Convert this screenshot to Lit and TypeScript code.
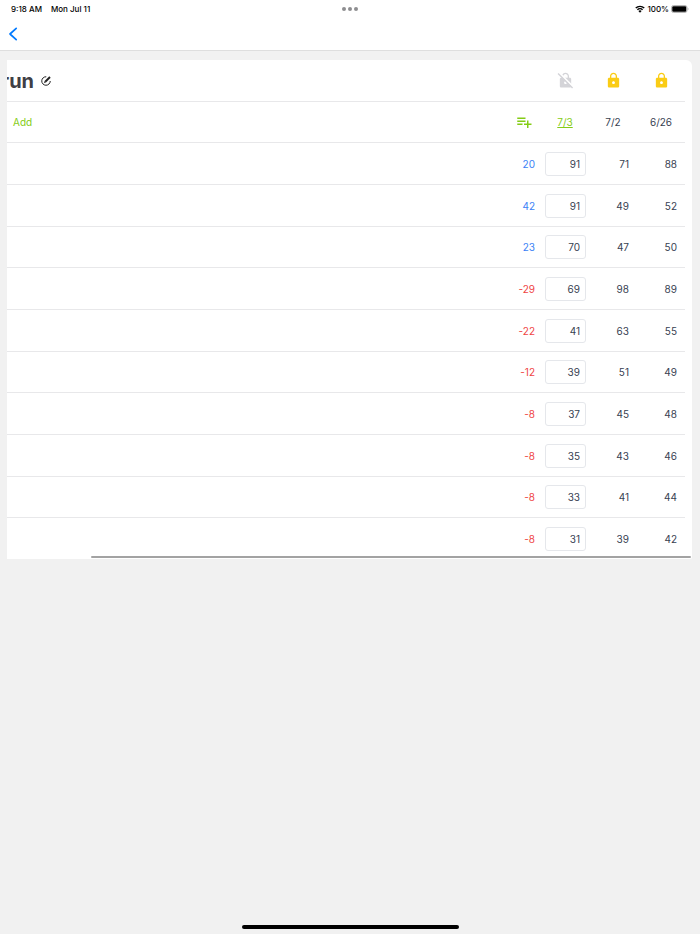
import { LitElement, html, css, svg, nothing } from "lit";
import { customElement, property, state } from "lit/decorators.js";
import { classMap } from "lit/directives/class-map.js";

const LOCK =
  "M18 8h-1V6c0-2.76-2.24-5-5-5S7 3.24 7 6v2H6c-1.1 0-2 .9-2 2v10c0 1.1.9 2 2 2h12c1.1 0 2-.9 2-2V10c0-1.1-.9-2-2-2zm-6 9c-1.1 0-2-.9-2-2s.9-2 2-2 2 .9 2 2-.9 2-2 2zm3.1-9H8.9V6c0-1.71 1.39-3.1 3.1-3.1 1.71 0 3.1 1.39 3.1 3.1v2z";

const ROWS: [number, number, number, number][] = [
  [20, 91, 71, 88],
  [42, 91, 49, 52],
  [23, 70, 47, 50],
  [-29, 69, 98, 89],
  [-22, 41, 63, 55],
  [-12, 39, 51, 49],
  [-8, 37, 45, 48],
  [-8, 35, 43, 46],
  [-8, 33, 41, 44],
  [-8, 31, 39, 42],
];

@customElement("status-bar")
class StatusBar extends LitElement {
  static styles = css`
    :host {
      display: grid;
      grid-template-columns: 1fr auto 1fr;
      align-items: center;
      height: 17px;
      padding: 0 11px;
      font-size: 8px;
      font-weight: 500;
      line-height: 16px;
      color: #000;
    }
    .left { display: flex; gap: 9px; }
    .dots { display: flex; gap: 2px; }
    .dot { width: 4px; height: 4px; border-radius: 50%; background: #8e8e90; }
    .right { display: flex; justify-content: flex-end; align-items: center; gap: 2px; }
    .battery { width: 18px; height: 8px; }
    .wifi { width: 10px; height: 8px; }
  `;
  render() {
    return html`
      <div class="left"><span>9:18 AM</span><span>Mon Jul 11</span></div>
      <div class="dots"><i class="dot"></i><i class="dot"></i><i class="dot"></i></div>
      <div class="right">
        <svg class="wifi" viewBox="0 0 20 16" fill="none" stroke="#000" stroke-width="2.8">
          <path d="M1.5 6.2a12 12 0 0 1 17 0M4.8 9.6a7.4 7.4 0 0 1 10.4 0" />
          <path d="M10 15.4 6.8 12.2a4.5 4.5 0 0 1 6.4 0z" fill="#000" stroke="none" />
        </svg>
        <span>100%</span>
        <svg class="battery" viewBox="0 0 36 16">
          <rect x="1" y="1" width="31" height="14" rx="4" fill="#fff" stroke="#a5a5a5" stroke-width="1.6" />
          <rect x="2.500" y="2.500" width="28" height="11" rx="2.4" fill="#000" />
          <path d="M33.5 5.5c2 .6 2 4.400 0 5z" fill="#a5a5a5" />
        </svg>
      </div>
    `;
  }
}

@customElement("lock-icon")
class LockIcon extends LitElement {
  @property({ type: Boolean }) off = false;
  static styles = css`
    :host { display: block; width: 17px; height: 17px; }
    svg { display: block; width: 17px; height: 17px; }
  `;
  render() {
    return html`<svg viewBox="0 0 24 24">
      <path d=${LOCK} fill="currentColor" />
      ${this.off
        ? svg`<path d="M2.500 0.500 24 22" stroke="#fff" stroke-width="2.500" />
              <path d="M1.500 2 22 22.500" stroke="currentColor" stroke-width="2" />`
        : nothing}
    </svg>`;
  }
}

@customElement("app-root")
class AppRoot extends LitElement {
  @state() private selected = "7/3";
  @state() private locked: Record<string, boolean> = { "7/3": false, "7/2": true, "6/26": true };

  static styles = css`
    :host {
      display: flex;
      flex-direction: column;
      min-height: 100vh;
      background: #f1f1f1;
      font-family: Inter, "Liberation Sans", sans-serif;
      color: #374151;
    }
    button {
      border: 0;
      padding: 0;
      background: none;
      font: inherit;
      color: inherit;
      cursor: pointer;
    }
    svg { display: block; }
    header { background: #fff; border-bottom: 1px solid #dedede; }
    nav { display: flex; align-items: center; height: 33px; padding: 0 8px; }
    .back, .back svg { width: 10px; height: 14px; }
    main { flex: 1; padding: 9px 8px 0 7px; }
    .card {
      position: relative;
      overflow: hidden;
      padding-right: 7px;
      background: #fff;
      border-radius: 0 6px 2px 0;
    }
    table {
      width: 100%;
      table-layout: fixed;
      border-collapse: separate;
      border-spacing: 0;
      font-size: 10px;
      line-height: 14px;
    }
    tr { height: 42px; }
    thead tr:last-child, tbody tr:nth-child(3n), tbody tr:last-child { height: 41px; }
    th, td {
      padding: 0 8px;
      border-bottom: 1px solid #e8e8ea;
      font-weight: 400;
      text-align: right;
      vertical-align: middle;
    }
    tbody tr:last-child td { border-bottom: 0; }
    th.date { padding: 0; text-align: center; }
    th.lead { padding: 0 6px; text-align: left; }
    .date-col { width: 48px; }
    .delta-col { width: 40px; }
    td.delta { padding: 0 6px 0 0; color: #3b82f6; }
    td.delta.down { color: #ef4444; }
    th.sort { padding: 0 8px 0 0; }
    th.sort button { display: inline-block; vertical-align: middle; }
    .title { display: flex; align-items: center; gap: 7px; margin-left: -12px; }
    h1 {
      margin: 0;
      font-size: 20px;
      line-height: 24px;
      font-weight: 700;
      color: #3f3f46;
    }
    .edit, .edit svg { width: 10px; height: 10px; }
    .edit { color: #222; }
    .accent { color: #84cc16; }
    .sort svg { width: 18px; height: 18px; }
    .current { color: #84cc16; text-decoration: underline; }
    .lock { color: #facc15; vertical-align: middle; }
    .lock.open { color: #d4d4d8; }
    td.entry { padding: 0 3px 0 4px; }
    input {
      display: block;
      box-sizing: border-box;
      width: 100%;
      height: 24px;
      padding: 0 5px;
      border: 1px solid #e5e7eb;
      border-radius: 3px;
      background: #fff;
      font: inherit;
      color: inherit;
      text-align: right;
    }
    .thumb {
      position: absolute;
      right: 1px;
      bottom: 1px;
      width: calc(100% - 85px);
      height: 2px;
      border-radius: 1px;
      background: #a3a3a3;
    }
    footer { display: flex; justify-content: center; padding-bottom: 5px; }
    .home { width: 31%; height: 4px; border-radius: 2px; background: #000; }
  `;

  private toggle(date: string) {
    this.locked = { ...this.locked, [date]: !this.locked[date] };
  }

  render() {
    const dates = Object.keys(this.locked);
    return html`
      <header>
        <status-bar></status-bar>
        <nav>
          <button class="back" aria-label="Back">
            <svg viewBox="0 0 10 14" fill="none" stroke="#007aff" stroke-width="1.700" stroke-linecap="round" stroke-linejoin="round">
              <path d="M8.200 1.400 2 7l6.200 5.600" />
            </svg>
          </button>
        </nav>
      </header>
      <main>
        <div class="card">
          <table>
            <colgroup>
              <col /><col class="delta-col" />
              ${dates.map(() => html`<col class="date-col" />`)}
            </colgroup>
            <thead>
              <tr>
                <th class="lead" colspan="2">
                  <div class="title">
                    <h1>run</h1>
                    <button class="edit" aria-label="Edit name">
                      <svg viewBox="0 0 20 20" fill="none" stroke="currentColor" stroke-width="2">
                        <path d="M10.500 1.500A8.500 8.500 0 1 0 18.500 10" />
                        <path d="M8.500 11.500 18 2" stroke-width="3.800" />
                        <path d="M6 14 7.200 10.200l2.600 2.600z" fill="currentColor" stroke="none" />
                      </svg>
                    </button>
                  </div>
                </th>
                ${dates.map(
                  (d) => html`<th class="date">
                    <button
                      class=${classMap({ lock: true, open: !this.locked[d] })}
                      aria-label="Toggle lock for ${d}"
                      @click=${() => this.toggle(d)}
                    ><lock-icon ?off=${!this.locked[d]}></lock-icon></button>
                  </th>`
                )}
              </tr>
              <tr>
                <th class="lead"><button class="accent">Add</button></th>
                <th class="sort">
                  <button class="accent" aria-label="Add column">
                    <svg viewBox="0 0 24 24" fill="currentColor">
                      <path d="M14 10H3v2h11v-2zm0-4H3v2h11V6zm4 8v-4h-2v4h-4v2h4v4h2v-4h4v-2h-4zM3 16h7v-2H3v2z" />
                    </svg>
                  </button>
                </th>
                ${dates.map(
                  (d) => html`<th class="date">
                    <button class=${classMap({ current: d === this.selected })} @click=${() => (this.selected = d)}>${d}</button>
                  </th>`
                )}
              </tr>
            </thead>
            <tbody>
              ${ROWS.map(
                ([delta, now, prev, older]) => html`<tr>
                  <td></td>
                  <td class=${classMap({ delta: true, down: delta < 0 })}>${delta}</td>
                  <td class="entry"><input inputmode="numeric" aria-label="Value for 7/3" .value=${String(now)} /></td>
                  <td>${prev}</td>
                  <td>${older}</td>
                </tr>`
              )}
            </tbody>
          </table>
          <div class="thumb"></div>
        </div>
      </main>
      <footer><div class="home"></div></footer>
    `;
  }
}
